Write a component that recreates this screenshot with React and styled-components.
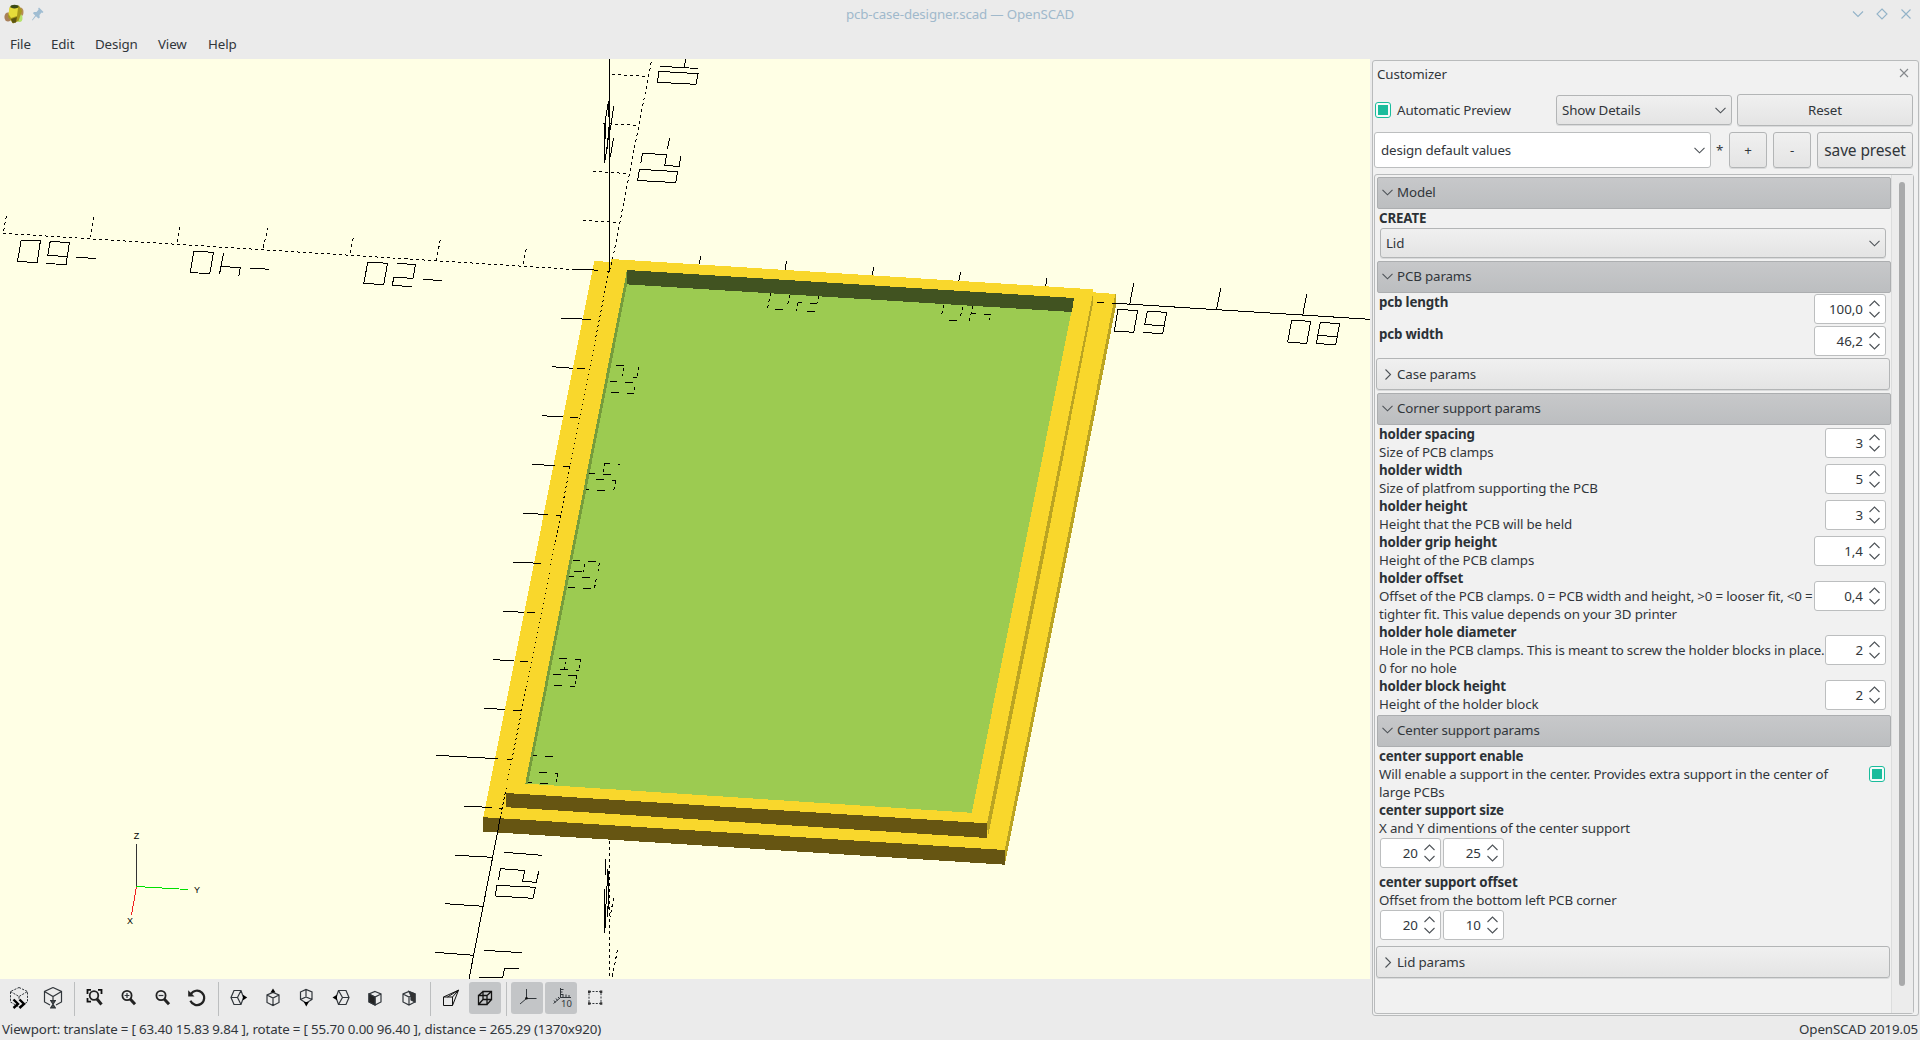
import React from "react";
import styled, { createGlobalStyle, css } from "styled-components";

const Global = createGlobalStyle`
  * { box-sizing: border-box; }
  html, body { margin: 0; padding: 0; overflow: hidden; }
  body {
    background: #ebebeb;
    color: #31363b;
    font-family: "Noto Sans", "Open Sans", sans-serif;
    font-size: 13.33px;
    line-height: 18px;
    letter-spacing: -0.13px;
    word-spacing: -0.1px;
  }
`;

/* ---------- window ---------- */
const Window = styled.div`
  display: flex;
  flex-direction: column;
  width: 1920px;
  height: 1040px;
  background: #ebebeb;
`;
const TitleBar = styled.header`
  display: grid;
  grid-template-columns: 1fr auto 1fr;
  align-items: center;
  height: 29px;
  padding: 0 8px 1px 3px;
  color: #a0b9cb;
`;
const TitleText = styled.span`
  padding: 0 0 1px 5px;
`;
const TitleIcons = styled.div`
  display: flex;
  align-items: center;
  gap: 6px;
`;
const WindowButtons = styled.div`
  display: flex;
  justify-content: flex-end;
  gap: 12px;
`;
const MenuBar = styled.nav`
  display: flex;
  height: 30px;
  padding: 6px 0 0 10px;
`;
const MenuItem = styled.span`
  width: ${(p) => p.$w}px;
  white-space: nowrap;
`;
const Body = styled.main`
  display: flex;
  height: 957px;
`;
const Left = styled.section`
  display: flex;
  flex-direction: column;
  width: 1370px;
`;
const Scene = styled.svg`
  display: block;
  width: 1370px;
  height: 920px;
  background: #ffffe5;
`;
const Toolbar = styled.div`
  display: flex;
  align-items: flex-start;
  gap: 2px;
  height: 37px;
  padding: 3px 0 0 3px;
`;
const ToolButton = styled.button`
  display: flex;
  align-items: center;
  justify-content: center;
  width: 32px;
  height: 32px;
  padding: 0;
  border: 0;
  border-radius: 3px;
  background: ${(p) => (p.$on ? "#c3c5c7" : "transparent")};
`;
const ToolSeparator = styled.i`
  width: 1px;
  height: 34px;
  margin: 0 2px 0 3px;
  background: #bcbebf;
`;
const StatusBar = styled.footer`
  display: flex;
  justify-content: space-between;
  height: 24px;
  padding: 4px 2px 0 2px;
  white-space: nowrap;
`;

/* ---------- customizer ---------- */
const DockArea = styled.aside`
  width: 550px;
  padding: 1px 1px 0 2px;
`;
const Dock = styled.div`
  display: flex;
  flex-direction: column;
  height: 956px;
  padding: 0 4px 1px 1px;
  border: 1px solid #b9bbbc;
  border-radius: 3px;
  background: #f1f1f1;
`;
const DockTitle = styled.div`
  display: flex;
  justify-content: space-between;
  height: 33px;
  padding: 4px 4px 0 3px;
`;
const ControlRow = styled.div`
  display: flex;
  align-items: center;
  height: ${(p) => p.$h}px;
  margin-bottom: 6px;
`;
const raised = css`
  border: 1px solid #b3b5b6;
  border-radius: 3px;
  background: linear-gradient(#f0f0f0, #e4e4e4);
  box-shadow: 0 1px 0 #d9dadb;
`;
const Button = styled.button`
  ${raised}
  width: ${(p) => p.$w}px;
  height: 100%;
  margin-left: ${(p) => p.$ml ?? 6}px;
  padding: 0;
  color: inherit;
  font: inherit;
  font-size: ${(p) => (p.$big ? 15.5 : 13.33)}px;
  letter-spacing: inherit;
  white-space: nowrap;
`;
const Combo = styled.div`
  ${raised}
  display: flex;
  align-items: center;
  justify-content: space-between;
  width: ${(p) => p.$w}px;
  height: ${(p) => p.$h || 30}px;
  padding: 0 5px 0 ${(p) => p.$pl || 5}px;
  ${(p) => p.$edit && css`background: #fff; box-shadow: none; border-color: #bcbebf;`}
`;
const Check = styled.span`
  flex: none;
  width: 16px;
  height: 16px;
  padding: 2px;
  border: 1px solid #1abc9c;
  border-radius: 3px;
  background: #f7fbfa;
  &::before {
    content: "";
    display: block;
    height: 10px;
    background: #1abc9c;
  }
`;
const CheckLabel = styled.label`
  display: flex;
  align-items: center;
  gap: 6px;
  width: 182px;
  padding-left: 1px;
`;
const Star = styled.span`
  width: 18px;
  padding-left: 5px;
`;
const ScrollFrame = styled.div`
  display: flex;
  flex: 1;
  border: 1px solid #b9bbbc;
  border-radius: 3px;
`;
const ScrollContent = styled.div`
  width: 516px;
  padding-top: 2px;
`;
const ScrollBar = styled.div`
  flex: 1;
  padding: 7px 0 0 7px;
  border-left: 1px solid #dcdddd;
  background: #ececec;
`;
const ScrollThumb = styled.div`
  width: 6px;
  height: 804px;
  border-radius: 3px;
  background: #a9aaab;
`;
const GroupHeader = styled.div`
  display: flex;
  align-items: center;
  gap: 4px;
  width: 514px;
  height: 32px;
  margin: ${(p) => p.$mt || 0}px 0 ${(p) => (p.$open ? 1 : 0)}px ${(p) => (p.$open ? 2 : 1)}px;
  padding: 0 0 ${(p) => (p.$open ? 2 : 0)}px ${(p) => (p.$open ? 4 : 5)}px;
  border-radius: 2px;
  ${(p) =>
    p.$open
      ? css`
          border: 1px solid #acaeb0;
          background: linear-gradient(#c7c8ca, #bcbec0);
        `
      : raised}
`;
const Param = styled.div`
  display: flex;
  align-items: center;
  justify-content: space-between;
  height: ${(p) => p.$h}px;
  padding: 0 ${(p) => p.$pr || 5}px 2px 4px;
`;
const ParamText = styled.div`
  align-self: flex-start;
  width: 0;
  margin-top: -1px;
  white-space: pre;
`;
const Name = styled.div`
  font-weight: 700;
  color: #2c3136;
`;
const FieldStack = styled.div`
  margin: -1px 0 1px;
  padding-left: 4px;
`;
const ComboIndent = styled.div`
  padding-left: 5px;
`;
const VectorRow = styled.div`
  display: flex;
  gap: 2px;
  height: 36px;
  padding-left: 5px;
`;
const Spin = styled.div`
  display: flex;
  align-items: center;
  justify-content: flex-end;
  gap: 6px;
  width: ${(p) => (p.$wide ? 72 : 61)}px;
  height: 30px;
  padding-right: 5px;
  border: 1px solid #bcbebf;
  border-radius: 3px;
  background: #fff;
  letter-spacing: 0;
`;
const Stroke = styled.svg`
  flex: none;
  display: block;
  fill: none;
  stroke: ${(p) => p.$c || "#4d5257"};
  stroke-width: ${(p) => p.$sw || 1.1};
`;

const Down = ({ c }) => (
  <Stroke width="11" height="7" $c={c}><path d="M.5 .8 5.5 5.8 10.5 .8" /></Stroke>
);
const RightArrow = () => (
  <Stroke width="11" height="11"><path d="M3.5 .5 8.5 5.5 3.5 10.5" /></Stroke>
);
const SpinBox = ({ value, wide }) => (
  <Spin $wide={wide}>
    <span>{value}</span>
    <Stroke width="11" height="18"><path d="M.5 6 5.5 1 10.5 6M.5 12 5.5 17 10.5 12" /></Stroke>
  </Spin>
);
const Group = ({ title, open, mt }) => (
  <GroupHeader $open={open} $mt={mt}>
    {open ? <Down /> : <RightArrow />}
    <span>{title}</span>
  </GroupHeader>
);
const ParamRow = ({ name, desc, lines = 2, children, pr }) => (
  <Param $h={lines * 18} $pr={pr}>
    <ParamText>
      <Name>{name}</Name>
      {desc}
    </ParamText>
    {children}
  </Param>
);

/* ---------- 3D view ---------- */
const SOLID_LINES = [
  // vertical axis
  "609.3,0 609.3,212",
  "571.7,210.3 585,210.3 597.7,211.3", "606.5,212.3 609.5,212.3",
  // labels of the negative Y axis
  "21.2,181 40.4,182 37.1,203.6 17.5,202.4 21.2,181",
  "46.5,204.5 66,205.6 69.4,183.6 50.2,182.4 47.8,196.4 66.6,197.5", "76,198.4 96,199.4",
  "193.9,192.3 213.5,193.3 209.8,214.7 190.2,213.5 193.9,192.3",
  "223.6,194.3 219.6,214.7", "220.4,207.4 240.3,208.7 238.8,216.7", "249.8,209.2 269,210.2",
  "367.8,203.3 387.5,204.2 383.7,225.6 363.7,224.4 367.8,203.3",
  "397.5,204.4 415.5,205.6 413,219.3 393.9,218.3 392.2,226.4 411.8,227.6", "422.8,220.4 442,221.5",
  // labels of the negative X axis
  "659,12.3 698,14.7 696,25.3 657.3,23.3 659,12.3", "660.3,7.3 698,9.5", "685.7,0 684.3,7.7",
  "669.5,79 667.5,90", "640.7,104.5 642.5,94.5 666.5,95.5 664.8,106.4 679.3,107.5 680.7,97",
  "639.5,110.3 677.7,112.7 675.7,123.6 637.5,121.5 639.5,110.3",
  // labels of the Z axis, seen edge-on
  "608.6,42 605.5,60 605.4,80", "608.6,42 608.6,58", "613.7,47 611,66 608.2,80 604.6,104",
  "604.5,65 604.5,104", "608.5,68 607.5,90", "613.6,79 610.3,98",
  "605.7,800 605.7,816", "608,810 606,845 604.8,874", "604.8,830 604.8,874", "608.6,812 608.6,850",
  "609,836 607,858",
  // ticks of the positive Y axis
  "700.7,197 699.3,205", "786.3,202 785.3,211", "873.3,208.3 872.7,216.3", "960.7,213 958.7,222",
  "1046.7,219 1045.7,227", "1133.7,224.3 1129.7,245.3", "1220.7,229.3 1216.3,251.3", "1306.7,235 1302.7,256.3",
  "1097,243.4 1104,243.4", "1112.3,244.1 1370,260.3",
  "1118,250.3 1137.7,251.7 1133.7,273.3 1114.3,272 1118,250.3",
  "1143.3,273.5 1162.7,274.6 1166.7,253.3 1147.3,252.3 1144.7,265.6 1163.7,266.6",
  "1291.7,261.3 1310.7,262.3 1306.7,284.6 1287.7,283 1291.7,261.3",
  "1320.3,263.3 1339.7,264.7 1335.7,285.6 1316.3,284.6 1320.3,263.3", "1317.3,276.3 1336.7,277.7",
  // ticks of the positive X axis
  "561,259.3 591,260.3", "552.3,307.7 573,309.3", "577,309.3 585,309.3", "542,356.7 563,358",
  "570,358.3 578,358.3", "532,405.3 555,406.7", "563,407.3 570,407.3", "523,454.3 548,455.5",
  "556,456.3 561,456.3", "513,503.3 541,504.3", "503,552.3 524,553.3", "527,553.3 535,553.3",
  "493,600.5 514,602", "520,602.3 528,602.3", "484,649.4 505,650.4", "513,651.3 521,651.3",
  "436,696.3 498,699.7", "507,700.3 512,700.3", "464,747.3 492,748.4", "499,749.3 503,749.3",
  "455.5,796.3 492.6,798.3", "445.3,844.7 483,847.3", "435,893.3 473.5,896.3",
  "500.4,758.3 469,920",
  "504.5,793.3 541.6,796.3", "498.4,821 500.4,809.7 524.9,811.5 522.4,822.3 536.3,823.3 538.8,812",
  "496.7,826.3 535.5,828.3 533,839.3 495.5,837 496.7,826.3",
  "484,891.3 521.6,893.7", "519.2,909.3 504.5,909.3 502.8,918.6 479.5,918.3",
  // labels seen through the lid floor
  "775.3,250.3 782.7,250.3", "797.7,243.5 801.7,243.5", "810,244.3 817,244.3", "807,252.3 814.7,252.3",
  "949,261.3 956.7,261.3", "971,254.4 975.7,254.4", "984,255.3 990.7,255.3", "989.5,258.5 989.5,261",
  "616,306.3 624,306.3", "633,318.3 637,318.3", "610,322.3 617,322.3", "625,323.3 633,323.3",
  "611,333.3 619,333.3", "627,334.3 633.7,334.3",
  "605,404.3 610,404.3", "603,415.3 611,415.3", "589,414.3 595,414.3", "618,405.3 620,405.3",
  "596,420.3 604,420.3", "612,421.3 616,421.3", "586,430.3 589,430.3", "597,431.3 605,431.3",
  "573,501.3 580,501.3", "588,502.3 596,502.3", "574,512.3 582,512.3", "569,517.3 574,517.3",
  "582,518.3 590,518.3", "568,528.3 575,528.3", "583,529.3 591,529.3",
  "559,599.3 567,599.3", "575,600.3 581,600.3", "576,611.3 579,611.3", "560,610.3 568,610.3",
  "553,615.3 561,615.3", "568,616.3 576,616.3", "554,626.3 562,626.3", "570,627.3 575,627.3",
  "533,696.3 537,696.3", "545,697.3 553,697.3", "539,713.3 547,713.3", "555,714.3 558,714.3",
  "528,723.3 532,723.3", "540,724.3 548,724.3",
];
const DASHED_LINES = [
  "3.3,174.3 571,210.3",
  "3.7,172 6.5,156", "90,178.5 93.5,158", "177.5,183 180,167", "263.3,188.5 267.8,169",
  "350.2,193.7 353.5,177.7", "436.5,201.5 440.4,179.7", "523.3,205 526.5,189",
  "609.5,212 612.7,200 651.3,3",
  "612,15.3 646.7,17.5", "603.3,64.3 636.7,66.3", "593.3,112.3 626.7,114.5", "583.3,161.3 617.3,163.6",
  "609.4,782 609.4,920", "613.5,839 610.2,858", "617.5,891 612.2,918",
  "770.5,234.5 767.5,249.5", "789.7,236 787.3,248", "797.7,244 796.5,252", "818.7,237 817.3,244",
  "943.5,246 941.3,258", "962.7,248.3 960,259.7", "972.7,247 969.3,262.7",
  "623.7,309.5 622.5,317.5", "638.7,308.3 637.5,317", "634.5,328 633.7,335",
  "604.6,404 603.5,414", "615.5,422 613.5,433", "599.3,504 598.2,512", "584.5,505 583,513",
  "596.3,520 594.3,530", "565.3,602.5 564.3,610", "580.5,600 578.7,611", "576.5,616.5 575.5,628",
  "557.5,714.5 556.7,724",
];
const DOTTED_AXIS = [
  ["609,212 595.3,281", "2 3"],
  ["595.3,281 570,407.7", "1 4"],
  ["570,407.7 555,485", "2 3"],
  ["555,485 526,630", "1 4"],
  ["526,630 512,700", "2 3"],
  ["512,700 505.5,733", "1 4"],
  ["505.5,733 500.4,758.3", "3 2"],
];
const FACES = [
  ["#f9d72c", "594.3,202 611,203 1093,233.3 1116,235 1005,791.3 483.3,758.3"],
  ["#bba422", "1115.3,235 1116,235 1116,246 1106.8,294 1066.2,501 1005.3,803 1004.7,791 1063,501"],
  ["#665512", "483,758.2 1005,791 1005,805.7 483,772.6"],
  ["#bba422", "1092.7,235 1092.7,246 1043.3,501 988,778 987,764 1039.7,501"],
  ["#f9d72c", "611.5,200 1093,230.3 1092.7,236 1039.8,501 987,764.5 506,734.3"],
  ["#665512", "506,734 987,764.3 987,779 506,748.2"],
  ["#9ccb51", "627,211 1074,239 971.8,753.8 525.3,724.6"],
  ["#415321", "627,211 1074,239 1072,253 627,225.4"],
  ["#769c3c", "627,211 627,226 616,281 528,725 525.3,724.6"],
];

const Viewport = () => (
  <Scene viewBox="0 0 1370 920">
    <g shapeRendering="crispEdges">
      {FACES.map(([fill, points], i) => <polygon key={i} fill={fill} points={points} />)}
      <g fill="none" stroke="#000" strokeWidth="1">
        {SOLID_LINES.map((p, i) => <polyline key={i} points={p} />)}
        {DASHED_LINES.map((p, i) => <polyline key={i} points={p} strokeDasharray="3 3" />)}
        {DOTTED_AXIS.map(([p, d], i) => <polyline key={i} points={p} strokeDasharray={d} />)}
      </g>
    </g>
    <g shapeRendering="crispEdges" fill="none">
      <path d="M136.4 828V785" stroke="#333" />
      <path d="M136.4 827.5 188 830.5" stroke="#00e000" />
      <path d="M136.4 828 131.5 856" stroke="#f02020" />
    </g>
    <g fontFamily="Liberation Sans, sans-serif" fontSize="9" textAnchor="middle" fill="#000">
      <text x="136.5" y="780">Z</text>
      <text x="197" y="834">Y</text>
      <text x="130" y="865">X</text>
    </g>
  </Scene>
);

/* ---------- toolbar icons ---------- */
const Icon = ({ children, sw = 1.2 }) => (
  <svg width="24" height="24" fill="none" stroke="#31363b" strokeWidth={sw}>{children}</svg>
);
const SmallCube = () => (
  <path d="M12 6.5 18 9v7.5l-6 3-6-3V9zM6 9l6 3 6-3M12 12v7.5" />
);
const Lens = () => (
  <>
    <circle cx="10" cy="9.5" r="4.6" stroke="#222" strokeWidth="1.8" />
    <path d="M13.2 13 18 18.2" stroke="#222" strokeWidth="3" />
  </>
);
const icons = {
  preview: (
    <Icon>
      <path d="M12 1.5 20.5 5.5V16L12 21 3.5 16V5.5zM3.5 5.5 12 10.5 20.5 5.5M12 10.5V14" strokeDasharray="2.2 1.2" strokeWidth="1" />
      <path d="M6.5 13.5 11 18 6.5 22M12.5 13.5 17 18 12.5 22" stroke="#000" strokeWidth="2.4" />
    </Icon>
  ),
  render: (
    <Icon>
      <path d="M12 1.5 20.5 5.5V16L15 19M9 19 3.5 16V5.5L12 1.5M3.5 5.5 12 10.5 20.5 5.5M12 10.5V15" />
      <path d="M9 14.5h6M9 22h6M10 15l2 3.2L10 21.5h4L12 18.2 14 15z" fill="#555" />
    </Icon>
  ),
  zoomAll: (
    <Icon>
      <path d="M4.500 8V3.800H8M15 3.800h3.500V8M4.500 12v3.600H8" stroke="#111" strokeWidth="1.8" />
      <circle cx="11" cy="9.5" r="4.3" stroke="#222" strokeWidth="1.8" />
      <path d="M14 13 18.5 18.5" stroke="#222" strokeWidth="3" />
    </Icon>
  ),
  zoomIn: <Icon><Lens /><path d="M7.6 9.5h4.8M10 7.1v4.8" /></Icon>,
  zoomOut: <Icon><Lens /><path d="M7.6 9.5h4.8" /></Icon>,
  reset: (
    <Icon>
      <path d="M5.8 8.2A7.2 7.2 0 1 1 5.4 14.8" stroke="#222" strokeWidth="2.2" />
      <path d="M3.2 4.2v6.3h6.3z" fill="#222" stroke="none" />
    </Icon>
  ),
  right: (
    <Icon>
      <path d="M7 4.5h7l2.5 7-2.5 7H7l-3-7zM4 11.5h6.5l3.5-7M10.5 11.5l3.5 7" />
      <path d="M16 8.7v5.6l4.2-2.8z" fill="#000" stroke="none" />
    </Icon>
  ),
  top: <Icon><SmallCube /><path d="M12 2.5 14.5 6.5h-5z" fill="#000" stroke="none" /></Icon>,
  bottom: (
    <Icon>
      <path d="M5.5 6 11 3.5 17 6v7.5l-5.8 3.5-5.7-3.5zM11 3.5V11M5.5 13.5 11 11l6 2.5" />
      <path d="M8.8 16h5l-2.5 4.5z" fill="#000" stroke="none" />
    </Icon>
  ),
  left: (
    <Icon>
      <path d="M9.5 4.5h7.5l3 7-3 7H9.5l-2.5-7zM20 11.5h-6.5L9.5 4.5M13.5 11.5l-4 7" />
      <path d="M8 8.7v5.6L3.500 11.5z" fill="#000" stroke="none" />
    </Icon>
  ),
  front: (
    <Icon>
      <path d="M12 5.5 18 8v8l-6 3-6-3V8zM6 8l6 3 6-3M12 11v8" />
      <path d="M6 8l6 3v8l-6-3z" fill="#222" />
    </Icon>
  ),
  back: (
    <Icon>
      <path d="M12 5.5 18 8v8l-6 3-6-3V8zM6 8l6 3 6-3M12 11v8" />
      <path d="M12 5.5 18 8v8l-4-2V10z" fill="#333" />
    </Icon>
  ),
  perspective: (
    <Icon>
      <path d="M4.5 11h9v8.500h-9zM4.5 11 19.5 4.2 13.500 11M19.500 4.2 13.500 19.500M8.500 11 19.500 4.2" stroke="#111" strokeWidth="1" />
    </Icon>
  ),
  orthogonal: (
    <Icon sw={1.3}>
      <path d="M5.5 9.5h8.5V18.5H5.5zM10 5.5h8.5v8H10zM5.5 9.5l4.5-4M14 9.5l4.5-4M14 18.5l4.5-5M5.5 18.5l4.5-5" stroke="#111" />
    </Icon>
  ),
  axes: (
    <Icon>
      <path d="M11.5 3v9M11.5 12.5 21.5 12.5M11.5 12.5 5 18" strokeWidth="1" />
      <circle cx="11.5" cy="12.2" r="1.3" fill="#111" stroke="none" />
    </Icon>
  ),
  scale: (
    <Icon>
      <path d="M11.5 2v9.5H22M11.5 3.5h3M11.5 6h2M11.5 8.5h3M14 11V9M17 11V8.5M20 11V9M11.5 11.5 4.5 17.5M9 11l1.5 1.5M7 12.5l1.5 2M5 14.5l1.5 2" strokeWidth="1" />
      <text x="12" y="21" fontSize="9.5" fontFamily="Noto Sans, sans-serif" fill="#31363b" stroke="none">10</text>
    </Icon>
  ),
  edges: (
    <Icon>
      <path d="M6 5.5h12v12H6z" strokeDasharray="2 1.4" strokeWidth="1" />
      <path d="M5 4.5h2.5v2.5H5zM16.8 4.5h2.5v2.5h-2.5zM5 16.2h2.5v2.5H5zM16.8 16.2h2.5v2.5h-2.5z" fill="#333" stroke="none" />
    </Icon>
  ),
};
const TOOLS = [
  "preview", "render", null, "zoomAll", "zoomIn", "zoomOut", "reset", null,
  "right", "top", "bottom", "left", "front", "back", null,
  "perspective", "orthogonal*", null, "axes*", "scale*", "edges",
];

const MENUS = [["File", 41], ["Edit", 44], ["Design", 63], ["View", 50], ["Help", 40]];

export default function App() {
  return (
    <Window>
      <Global />
      <TitleBar>
        <TitleIcons>
          <svg width="22" height="22" viewBox="0 0 22 22">
            <ellipse cx="5" cy="14" rx="3.6" ry="4.6" fill="#a9805a" />
            <ellipse cx="17" cy="9" rx="3.5" ry="4.5" fill="#b58d55" />
            <ellipse cx="16.5" cy="15" rx="3" ry="4" fill="#b6e36a" />
            <path d="M7 3.5 16 2.5 19 8 15.5 18 10 20.5 5 14z" fill="#a8991c" />
            <path d="M6.5 4.5 15 5 14 13 8 15 5.5 11z" fill="#e6dc3a" />
            <path d="M8 16 14 14 13 19.5 9.5 20z" fill="#5c5510" />
            <ellipse cx="11.5" cy="3.6" rx="4" ry="1.8" fill="#3c4a16" />
          </svg>
          <svg width="14" height="16" viewBox="0 0 14 16" fill="#a0bdd2">
            <path d="M8 1.5 12.5 6 11.3 7 10.5 6.6 8.5 9 8.7 11.8 7.5 12.6 5 10.2 1.5 14.5 1 14 4.2 9.4 2 7.2 2.9 6 5.5 6 7.6 3.6 7.2 2.6z" />
          </svg>
        </TitleIcons>
        <TitleText>pcb-case-designer.scad — OpenSCAD</TitleText>
        <WindowButtons>
          <Stroke width="12" height="12" $c="#93b3c8"><path d="M1 3.5 6 8.5 11 3.5" /></Stroke>
          <Stroke width="12" height="12" $c="#93b3c8"><path d="M6 1 11 6 6 11 1 6z" /></Stroke>
          <Stroke width="12" height="12" $c="#93b3c8"><path d="M1.5 1.5 10.5 10.5M10.5 1.5 1.5 10.5" /></Stroke>
        </WindowButtons>
      </TitleBar>
      <MenuBar>
        {MENUS.map(([name, w]) => <MenuItem key={name} $w={w}>{name}</MenuItem>)}
      </MenuBar>
      <Body>
        <Left>
          <Viewport />
          <Toolbar>
            {TOOLS.map((t, i) =>
              t ? (
                <ToolButton key={i} $on={t.endsWith("*")}>{icons[t.replace("*", "")]}</ToolButton>
              ) : (
                <ToolSeparator key={i} />
              )
            )}
          </Toolbar>
        </Left>
        <DockArea>
          <Dock>
            <DockTitle>
              <span>Customizer</span>
              <Stroke width="11" height="18" $c="#85898c"><path d="M1 4 9 12M9 4 1 12" /></Stroke>
            </DockTitle>
            <ControlRow $h={32}>
              <CheckLabel><Check />Automatic Preview</CheckLabel>
              <Combo $w={176}><span>Show Details</span><Down /></Combo>
              <Button $w={176} $ml={5}>Reset</Button>
            </ControlRow>
            <ControlRow $h={36}>
              <Combo $w={337} $h={36} $pl={6} $edit><span>design default values</span><Down /></Combo>
              <Star>*</Star>
              <Button $w={38} $ml={0}>+</Button>
              <Button $w={38}>-</Button>
              <Button $w={96} $big>save preset</Button>
            </ControlRow>
            <ScrollFrame>
              <ScrollContent>
                <Group title="Model" open />
                <FieldStack><Name>CREATE</Name></FieldStack>
                <ComboIndent><Combo $w={506}><span>Lid</span><Down /></Combo></ComboIndent>
                <Group title="PCB params" open mt={3} />
                <Param $h={32}><ParamText><Name>pcb length</Name></ParamText><SpinBox value="100,0" wide /></Param>
                <Param $h={32}><ParamText><Name>pcb width</Name></ParamText><SpinBox value="46,2" wide /></Param>
                <Group title="Case params" />
                <Group title="Corner support params" open mt={3} />
                <ParamRow name="holder spacing" desc="Size of PCB clamps"><SpinBox value="3" /></ParamRow>
                <ParamRow name="holder width" desc="Size of platfrom supporting the PCB"><SpinBox value="5" /></ParamRow>
                <ParamRow name="holder height" desc="Height that the PCB will be held"><SpinBox value="3" /></ParamRow>
                <ParamRow name="holder grip height" desc="Height of the PCB clamps"><SpinBox value="1,4" wide /></ParamRow>
                <ParamRow
                  name="holder offset"
                  desc={"Offset of the PCB clamps. 0 = PCB width and height, >0 = looser fit, <0 =\ntighter fit. This value depends on your 3D printer"}
                  lines={3}
                ><SpinBox value="0,4" wide /></ParamRow>
                <ParamRow
                  name="holder hole diameter"
                  desc={"Hole in the PCB clamps. This is meant to screw the holder blocks in place.\n0 for no hole"}
                  lines={3}
                ><SpinBox value="2" /></ParamRow>
                <ParamRow name="holder block height" desc="Height of the holder block"><SpinBox value="2" /></ParamRow>
                <Group title="Center support params" open mt={1} />
                <ParamRow
                  name="center support enable"
                  desc={"Will enable a support in the center. Provides extra support in the center of\nlarge PCBs"}
                  lines={3}
                  pr={6}
                ><Check /></ParamRow>
                <FieldStack><Name>center support size</Name>X and Y dimentions of the center support</FieldStack>
                <VectorRow><SpinBox value="20" /><SpinBox value="25" /></VectorRow>
                <FieldStack><Name>center support offset</Name>Offset from the bottom left PCB corner</FieldStack>
                <VectorRow><SpinBox value="20" /><SpinBox value="10" /></VectorRow>
                <Group title="Lid params" />
              </ScrollContent>
              <ScrollBar><ScrollThumb /></ScrollBar>
            </ScrollFrame>
          </Dock>
        </DockArea>
      </Body>
      <StatusBar>
        <span>Viewport: translate = [ 63.40 15.83 9.84 ], rotate = [ 55.70 0.00 96.40 ], distance = 265.29 (1370x920)</span>
        <span>OpenSCAD 2019.05</span>
      </StatusBar>
    </Window>
  );
}
